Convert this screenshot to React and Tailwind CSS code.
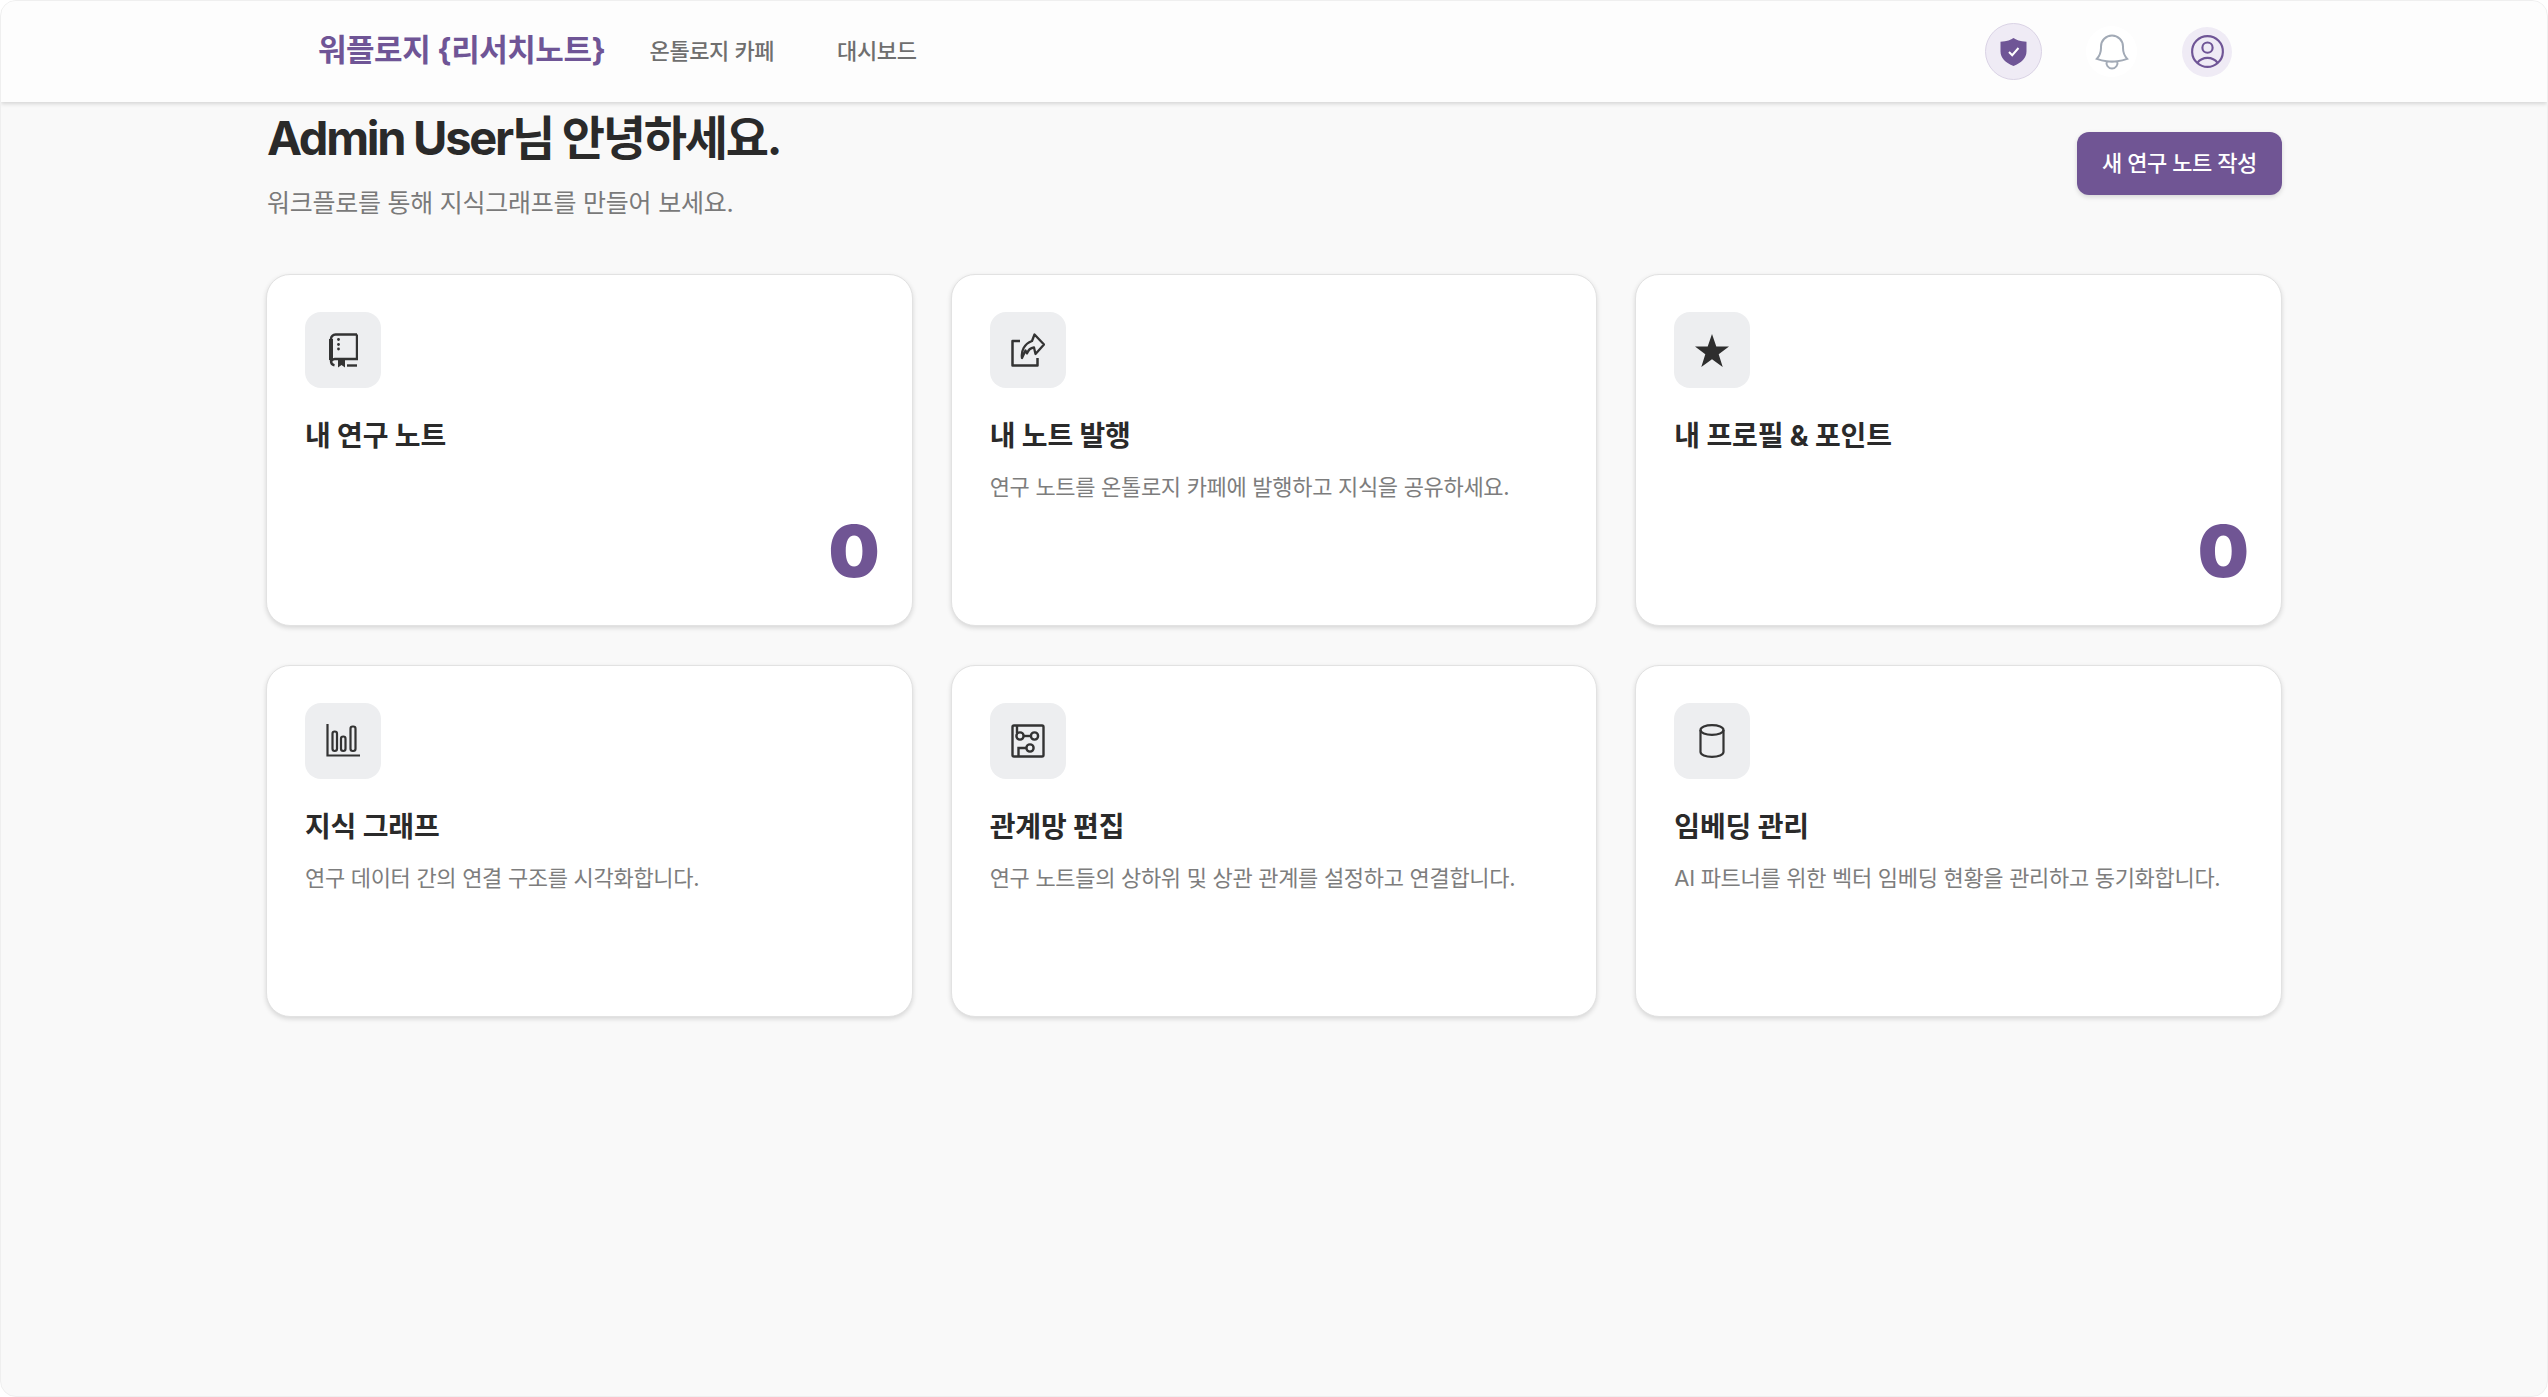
import React from 'react';

const fontStack = { fontFamily: 'Inter, "Noto Sans CJK KR", sans-serif' };

function BookIcon() {
  return (
    <svg width="29" height="35" viewBox="0 0 29 35" fill="none" stroke="#333" strokeWidth="2.4">
      <path d="M28 1.500H6.500A4.500 4.500 0 0 0 2 6v22a4.500 4.500 0 0 0 3.500 4.400" />
      <path d="M28 1.500V26H6.500A4.500 4.500 0 0 0 2 28" />
      <path d="M2 6v21" strokeWidth="4" />
      <path d="M18 32.500h10" />
      <path d="M9 27h7v7.500l-3.500-2.400L9 34.500z" fill="#333" stroke="none" />
      <circle cx="9.500" cy="6.500" r="1.400" fill="#333" stroke="none" />
      <circle cx="9.500" cy="11.500" r="1.400" fill="#333" stroke="none" />
      <circle cx="9.500" cy="16" r="1.400" fill="#333" stroke="none" />
    </svg>
  );
}

function ShareIcon() {
  return (
    <svg width="34" height="34" viewBox="0 0 34 34" fill="none" stroke="#333" strokeWidth="2.300" strokeLinejoin="round">
      <path d="M9 8H1.500v24.500h25V25" strokeWidth="2.500" />
      <path d="M11 25c-1-7 2-14 10-17L23.500 1.500 33 11.500 24.500 21l-1.500-6.500c-4 .5-6 3-7 6l-1.500-3z" />
    </svg>
  );
}

function StarIcon() {
  return (
    <svg width="34" height="33" viewBox="0 0 34 33" fill="#2e2e2e">
      <path d="M17 0l4.300 12.500H34l-10.300 7.800 4 12.700L17 25.200 6.300 33l4-12.700L0 12.500h12.700z" />
    </svg>
  );
}

function BarsIcon() {
  return (
    <svg width="34" height="33" viewBox="0 0 34 33" fill="none" stroke="#333" strokeWidth="2.200" className="-mt-[2px]">
      <path d="M1.500 0v31.500H34" />
      <rect x="6.500" y="7.500" width="4.500" height="19.500" rx="2.200" />
      <rect x="15" y="12.500" width="4.500" height="14.500" rx="2.200" />
      <rect x="24.500" y="2.500" width="5" height="24.500" rx="2.200" />
    </svg>
  );
}

function GraphIcon() {
  return (
    <svg width="34" height="34" viewBox="0 0 34 34" fill="none" stroke="#333" strokeWidth="2.400">
      <rect x="1.500" y="1.500" width="31" height="31" rx="1.500" />
      <path d="M6 1.500V9" />
      <circle cx="9" cy="12" r="3.600" />
      <circle cx="23.500" cy="12" r="3.600" />
      <path d="M12.600 12h7.300" />
      <circle cx="19" cy="24" r="3.600" />
      <path d="M15.400 24H7.500v8.500" />
    </svg>
  );
}

function DatabaseIcon() {
  return (
    <svg width="26" height="34" viewBox="0 0 26 34" fill="none" stroke="#333" strokeWidth="2.200">
      <ellipse cx="13" cy="6" rx="11.500" ry="4.800" />
      <path d="M1.500 6v22c0 2.700 5.100 4.800 11.500 4.800s11.500-2.100 11.500-4.800V6" />
    </svg>
  );
}

const cards = [
  { title: '내 연구 노트', icon: <BookIcon />, count: 0 },
  { title: '내 노트 발행', icon: <ShareIcon />, desc: '연구 노트를 온톨로지 카페에 발행하고 지식을 공유하세요.' },
  { title: '내 프로필 & 포인트', icon: <StarIcon />, count: 0 },
  { title: '지식 그래프', icon: <BarsIcon />, desc: '연구 데이터 간의 연결 구조를 시각화합니다.' },
  { title: '관계망 편집', icon: <GraphIcon />, desc: '연구 노트들의 상하위 및 상관 관계를 설정하고 연결합니다.' },
  { title: '임베딩 관리', icon: <DatabaseIcon />, desc: 'AI 파트너를 위한 벡터 임베딩 현황을 관리하고 동기화합니다.' },
];

export default function App() {
  return (
    <div style={fontStack} className="h-[1397px] overflow-hidden bg-white">
      <div className="h-full rounded-[16px] border border-[#efefef] bg-[#f9f9f9] overflow-hidden">
        {/* Top bar */}
        <header className="h-[101px] bg-[#fdfdfd] shadow-[0_2px_4px_rgba(0,0,0,0.14)] relative flex items-center justify-between pl-[317px] pr-[315px]">
          <div className="flex items-center">
            <span className="text-[31px] font-bold text-[#6f5596] tracking-[-0.015em] -mt-[2px]">워플로지 {'{'}리서치노트{'}'}</span>
            <nav className="flex items-center gap-[63px] ml-[44px] text-[22px] font-medium text-[#6f6f6f] tracking-[-0.018em]">
              <a>온톨로지 카페</a>
              <a>대시보드</a>
            </nav>
          </div>
          <div className="flex items-center">
            <button className="w-[57px] h-[57px] rounded-full bg-[#efebf5] border border-[#d9d2e4] flex items-center justify-center">
              <svg width="27" height="28" viewBox="0 0 27 28">
                <path d="M13.500 0c2.500 2 6.500 3.300 13 3.800v9.500c0 6.700-5 11.700-13 14.700-8-3-13-8-13-14.700V3.800C7 3.300 11 2 13.500 0z" fill="#6f5596" />
                <path d="M9 14l3.200 3.200L18.500 10" fill="none" stroke="#fff" strokeWidth="2" />
              </svg>
            </button>
            <button className="w-[51px] h-[51px] ml-[44px] rounded-full bg-white flex items-center justify-center">
              <svg width="44" height="44" viewBox="0 0 24 24" fill="none" stroke="#a2aab6" strokeWidth="1.100">
                <path d="M14.857 17.082a23.848 23.848 0 0 0 5.454-1.310A8.967 8.967 0 0 1 18 9.750V9A6 6 0 0 0 6 9v.75a8.967 8.967 0 0 1-2.312 6.022c1.733.64 3.560 1.085 5.455 1.310m5.714 0a24.255 24.255 0 0 1-5.714 0m5.714 0a3 3 0 1 1-5.714 0" />
              </svg>
            </button>
            <button className="w-[50px] h-[50px] ml-[45px] rounded-full bg-[#efebf5] flex items-center justify-center">
              <svg width="41" height="41" viewBox="0 0 24 24" fill="none" stroke="#6f5596" strokeWidth="1.250">
                <path d="M17.982 18.725A7.488 7.488 0 0 0 12 15.750a7.488 7.488 0 0 0-5.982 2.975m11.964 0a9 9 0 1 0-11.963 0m11.963 0A8.966 8.966 0 0 1 12 21a8.966 8.966 0 0 1-5.982-2.275M15 9.750a3 3 0 1 1-6 0 3 3 0 0 1 6 0Z" />
              </svg>
            </button>
          </div>
        </header>

        <main className="w-[2016px] mx-auto">
          {/* Greeting */}
          <section className="flex items-start justify-between h-[172px]">
            <div>
              <h1 className="text-[47px] leading-[72px] font-bold text-[#2a2a2a] tracking-[-0.048em] ml-[1px]">Admin User님 안녕하세요.</h1>
              <p className="text-[25px] leading-[36px] text-[#7a7a7a] tracking-[-0.01em] mt-[11px] ml-[1px]">워크플로를 통해 지식그래프를 만들어 보세요.</p>
            </div>
            <button className="w-[205px] h-[63px] mt-[30px] rounded-[12px] bg-[#705594] text-white text-[22px] font-medium tracking-[-0.02em] shadow-[0_2px_5px_rgba(0,0,0,0.14)]">
              새 연구 노트 작성
            </button>
          </section>

          {/* Cards */}
          <section className="grid grid-cols-3 gap-x-[38px] gap-y-[39px]">
            {cards.map((card) => (
              <div key={card.title} className="relative h-[352px] rounded-[24px] border border-[#e2e2e2] bg-white px-[38px] pt-[37px] shadow-[0_2px_5px_rgba(0,0,0,0.14)]">
                <div className="w-[76px] h-[76px] rounded-[16px] bg-[#edeef0] flex items-center justify-center">
                  {card.icon}
                </div>
                <h3 className="text-[28px] leading-[42px] font-bold text-[#2a2a2a] tracking-[-0.005em] mt-[27px]">{card.title}</h3>
                {card.desc && (
                  <p className="text-[22px] leading-[32px] text-[#7d7d7d] tracking-[-0.014em] mt-[14px]">{card.desc}</p>
                )}
                {card.count !== undefined && (
                  <span className="absolute right-[32px] bottom-[29px] text-[72px] leading-[90px] font-black text-[#705594]">{card.count}</span>
                )}
              </div>
            ))}
          </section>
        </main>
      </div>
    </div>
  );
}
